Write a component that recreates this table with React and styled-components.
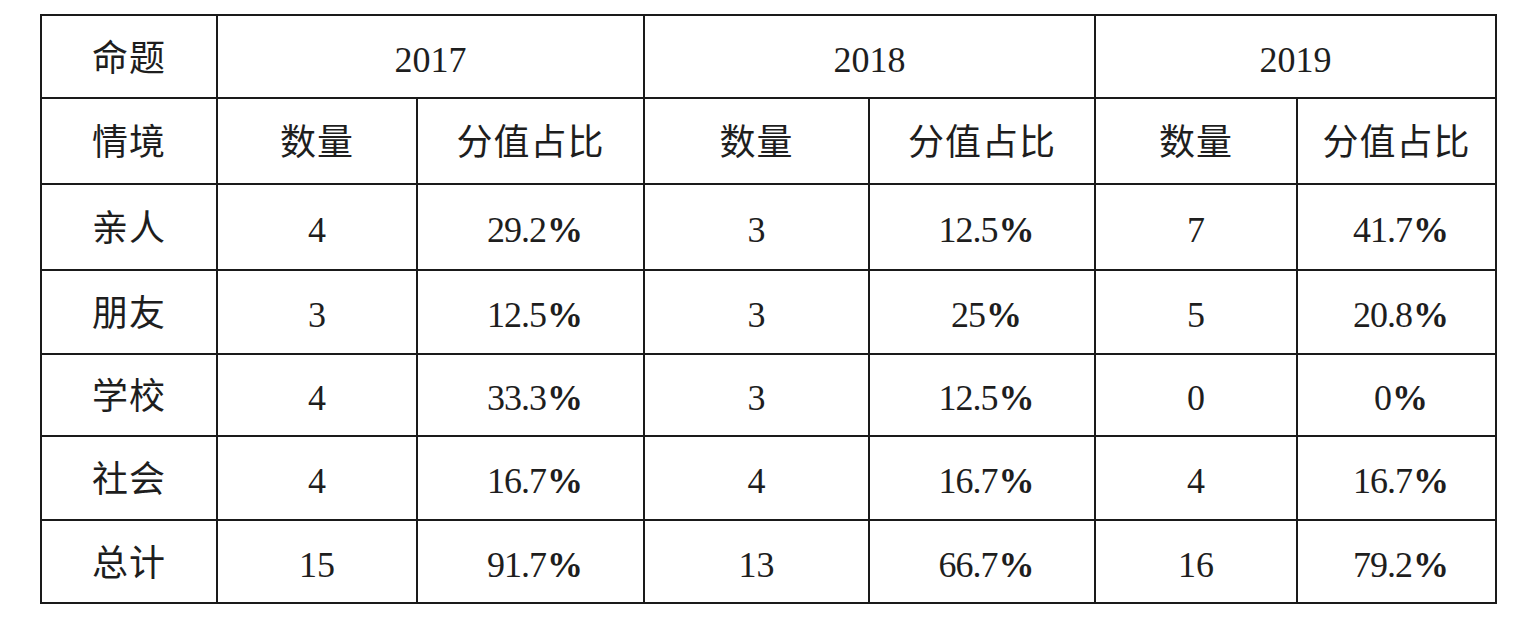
import styled, { createGlobalStyle } from "styled-components";

const GlobalStyle = createGlobalStyle`
  body {
    margin: 0;
    background: #fff;
  }
`;

const Page = styled.div`
  padding: 14px 0 0 40px;
`;

const Table = styled.table`
  border-collapse: collapse;
  table-layout: fixed;
  width: 1455px;
  color: #1e1e1e;
  font-family: "Liberation Serif", "Noto Sans CJK SC", serif;
  font-size: 36px;
`;

const Row = styled.tr`
  height: ${(props) => props.$h}px;
`;

const Cell = styled.td`
  border: 2px solid #1a1a1a;
  text-align: center;
  vertical-align: middle;
  padding: 6px 0 0 ${(props) => (props.$tight ? "9px" : "0")};
  letter-spacing: ${(props) => (props.$tight ? "-1px" : "0")};
`;

const Label = styled.span`
  font-family: "Noto Sans CJK SC", sans-serif;
  font-weight: 400;
  letter-spacing: 1px;
  position: relative;
  top: -5px;
`;

const Percent = styled.span`
  font-weight: 700;
  letter-spacing: 0;
  margin-left: 1px;
`;

const colWidths = [176, 200, 227, 225, 226, 202, 199];

const rows = [
  ["亲人", "4", "29.2", "3", "12.5", "7", "41.7"],
  ["朋友", "3", "12.5", "3", "25", "5", "20.8"],
  ["学校", "4", "33.3", "3", "12.5", "0", "0"],
  ["社会", "4", "16.7", "4", "16.7", "4", "16.7"],
  ["总计", "15", "91.7", "13", "66.7", "16", "79.2"],
];

const rowHeights = [86, 84, 82, 84, 83];

const Pct = ({ value }) => (
  <Cell $tight>
    {value}
    <Percent>%</Percent>
  </Cell>
);

const App = () => {
  return (
    <>
      <GlobalStyle />
      <Page>
        <Table>
          <colgroup>
            {colWidths.map((w, i) => (
              <col key={i} style={{ width: w }} />
            ))}
          </colgroup>
          <tbody>
            <Row $h={83}>
              <Cell>
                <Label>命题</Label>
              </Cell>
              <Cell colSpan={2}>2017</Cell>
              <Cell colSpan={2}>2018</Cell>
              <Cell colSpan={2}>2019</Cell>
            </Row>
            <Row $h={86}>
              <Cell>
                <Label>情境</Label>
              </Cell>
              {[0, 1, 2].map((i) => [
                <Cell key={`n${i}`}>
                  <Label>数量</Label>
                </Cell>,
                <Cell key={`p${i}`}>
                  <Label>分值占比</Label>
                </Cell>,
              ])}
            </Row>
            {rows.map((r, i) => (
              <Row key={r[0]} $h={rowHeights[i]}>
                <Cell>
                  <Label>{r[0]}</Label>
                </Cell>
                <Cell>{r[1]}</Cell>
                <Pct value={r[2]} />
                <Cell>{r[3]}</Cell>
                <Pct value={r[4]} />
                <Cell>{r[5]}</Cell>
                <Pct value={r[6]} />
              </Row>
            ))}
          </tbody>
        </Table>
      </Page>
    </>
  );
};

export default App;
